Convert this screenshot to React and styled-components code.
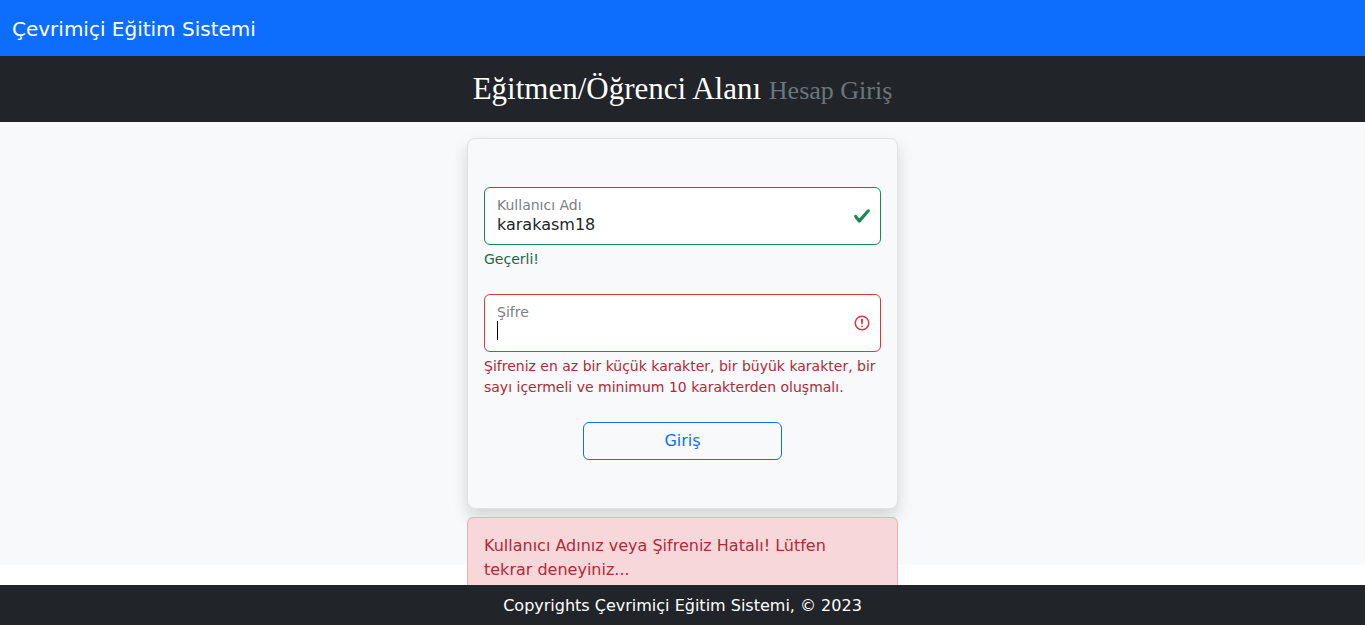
import React from "react";
import styled, { createGlobalStyle } from "styled-components";

const GlobalStyle = createGlobalStyle`
  *, *::before, *::after { box-sizing: border-box; }
  body {
    margin: 0;
    background: #fff;
    color: #212529;
    font-family: Verdana, "DejaVu Sans", sans-serif;
    font-size: 16px;
    line-height: 24px;
  }
`;

const Page = styled.div`
  min-height: 100vh;
  background: linear-gradient(#f8f9fa, #f8f9fa) top / 100% calc(100vh - 60px) no-repeat;
`;

const Navbar = styled.nav`
  padding: 14px 12px 12px;
  background: #0d6efd;
`;

const Brand = styled.a`
  display: block;
  color: #fff;
  font-size: 20px;
  line-height: 30px;
  text-decoration: none;
`;

const Banner = styled.header`
  padding: 16px;
  background: #212529;
  text-align: center;
`;

const Title = styled.h1`
  margin: 0;
  color: #fff;
  font-family: Georgia, "Liberation Serif", serif;
  font-size: 31px;
  font-weight: 400;
  line-height: 34px;
`;

const Subtitle = styled.small`
  color: #6c757d;
  font-size: 26px;
  line-height: 24px;
`;

const Content = styled.main`
  display: flex;
  flex-direction: column;
  gap: 8px;
  width: calc(100% / 3);
  margin: 0 auto;
  padding: 16px 12px;
`;

const Card = styled.form`
  display: flex;
  flex-direction: column;
  gap: 24px;
  padding: 48px 16px;
  background: #f8f9fa;
  border: 1px solid #dee2e6;
  border-radius: 8px;
  box-shadow: 0 8px 16px rgba(0, 0, 0, 0.15);
`;

const Field = styled.div`
  display: flex;
  flex-direction: column;
  gap: 4px;
`;

const Control = styled.div`
  position: relative;
  display: flex;
  align-items: center;
  min-height: 58px;
  padding: 0 9px 0 12px;
  background: #fff;
  border: 1px solid ${(p) => (p.$valid ? "#198754" : "#dc3545")};
  border-radius: 6px;
  svg { flex: none; }
`;

const Entry = styled.div`
  display: flex;
  flex: 1;
  flex-direction: column;
  min-width: 0;
  padding-bottom: 2px;
`;

const Label = styled.label`
  color: #7c7f82;
  font-size: 14px;
  line-height: 20px;
`;

const Input = styled.input`
  width: 100%;
  height: 20px;
  padding: 0;
  background: transparent;
  border: 0;
  outline: 0;
  color: #212529;
  font: inherit;
  line-height: 20px;
`;

const Caret = styled.span`
  position: absolute;
  left: 12px;
  bottom: 11px;
  width: 1px;
  height: 19px;
  background: #000;
`;

const Feedback = styled.div`
  color: ${(p) => (p.$valid ? "#146c43" : "#b02a37")};
  font-size: 14px;
  line-height: 21px;
`;

const SubmitButton = styled.button`
  align-self: center;
  width: 50%;
  padding: 6px 12px;
  background: transparent;
  border: 1px solid #0d6efd;
  border-radius: 6px;
  color: #0d6efd;
  font: inherit;
  line-height: 24px;
  cursor: pointer;
`;

const Alert = styled.div`
  padding: 16px 48px 16px 16px;
  background: #f8d7da;
  border: 1px solid #f1aeb5;
  border-radius: 6px;
  color: #b02a37;
`;

const Footer = styled.footer`
  position: fixed;
  right: 0;
  bottom: 0;
  left: 0;
  padding: 9px 8px 7px;
  background: #212529;
  color: #fff;
  text-align: center;
`;

const CheckIcon = () => (
  <svg width="18" height="18" viewBox="0 0 8 8" aria-hidden="true">
    <path
      fill="#198754"
      d="M2.3 6.73.6 4.53c-.4-1.04.46-1.4 1.1-.8l1.1 1.4 3.4-3.8c.6-.63 1.6-.27 1.2.7l-4 4.6c-.43.5-.8.4-1.1.1z"
    />
  </svg>
);

const ErrorIcon = () => (
  <svg width="18" height="18" viewBox="0 0 12 12" fill="none" stroke="#dc3545" aria-hidden="true">
    <circle cx="6" cy="6" r="4.5" />
    <path strokeLinejoin="round" d="M5.8 3.6h.4L6 6.5z" />
    <circle cx="6" cy="8.2" r=".6" fill="#dc3545" stroke="none" />
  </svg>
);

export default function App() {
  return (
    <>
      <GlobalStyle />
      <Page>
        <Navbar>
          <Brand href="#">Çevrimiçi Eğitim Sistemi</Brand>
        </Navbar>
        <Banner>
          <Title>
            Eğitmen/Öğrenci Alanı <Subtitle>Hesap Giriş</Subtitle>
          </Title>
        </Banner>
        <Content>
          <Card onSubmit={(e) => e.preventDefault()}>
            <Field>
              <Control $valid>
                <Entry>
                  <Label htmlFor="username">Kullanıcı Adı</Label>
                  <Input id="username" type="text" defaultValue="karakasm18" aria-describedby="username-note" />
                </Entry>
                <CheckIcon />
              </Control>
              <Feedback id="username-note" $valid>Geçerli!</Feedback>
            </Field>
            <Field>
              <Control>
                <Entry>
                  <Label htmlFor="password">Şifre</Label>
                  <Input id="password" type="password" aria-invalid="true" aria-describedby="password-note" />
                </Entry>
                <Caret />
                <ErrorIcon />
              </Control>
              <Feedback id="password-note">
                Şifreniz en az bir küçük karakter, bir büyük karakter, bir sayı içermeli ve minimum 10 karakterden oluşmalı.
              </Feedback>
            </Field>
            <SubmitButton type="submit">Giriş</SubmitButton>
          </Card>
          <Alert role="alert">Kullanıcı Adınız veya Şifreniz Hatalı! Lütfen tekrar deneyiniz...</Alert>
        </Content>
      </Page>
      <Footer>Copyrights Çevrimiçi Eğitim Sistemi, © 2023</Footer>
    </>
  );
}
